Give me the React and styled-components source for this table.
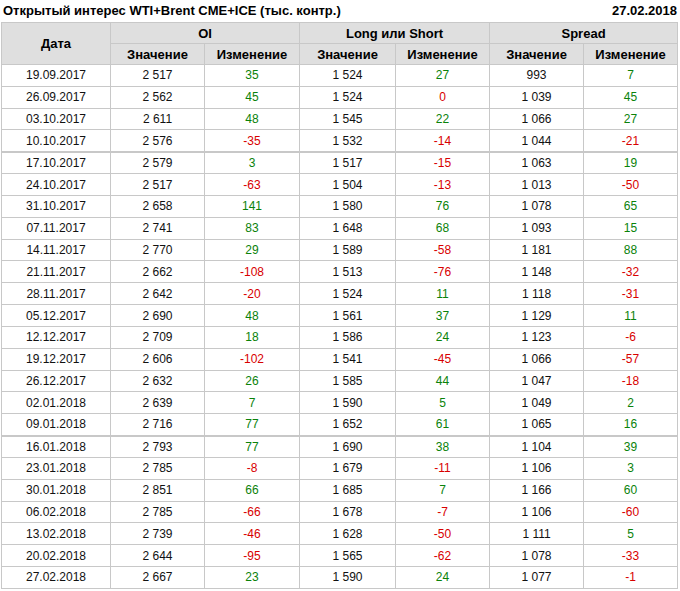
import React from 'react';
import styled, { createGlobalStyle } from 'styled-components';

const GlobalStyle = createGlobalStyle`
  html, body {
    margin: 0;
    padding: 0;
    background: #fff;
  }
  body {
    font-family: "Liberation Sans", Arial, sans-serif;
    color: #111;
  }
`;

// неделя, OI, изм., Long/Short, изм., Spread, изм., жирная линия сверху
const rows = [
  ['19.09.2017', '2 517', 35, '1 524', 27, '993', 7],
  ['26.09.2017', '2 562', 45, '1 524', 0, '1 039', 45],
  ['03.10.2017', '2 611', 48, '1 545', 22, '1 066', 27],
  ['10.10.2017', '2 576', -35, '1 532', -14, '1 044', -21],
  ['17.10.2017', '2 579', 3, '1 517', -15, '1 063', 19, true],
  ['24.10.2017', '2 517', -63, '1 504', -13, '1 013', -50],
  ['31.10.2017', '2 658', 141, '1 580', 76, '1 078', 65],
  ['07.11.2017', '2 741', 83, '1 648', 68, '1 093', 15],
  ['14.11.2017', '2 770', 29, '1 589', -58, '1 181', 88],
  ['21.11.2017', '2 662', -108, '1 513', -76, '1 148', -32],
  ['28.11.2017', '2 642', -20, '1 524', 11, '1 118', -31],
  ['05.12.2017', '2 690', 48, '1 561', 37, '1 129', 11],
  ['12.12.2017', '2 709', 18, '1 586', 24, '1 123', -6],
  ['19.12.2017', '2 606', -102, '1 541', -45, '1 066', -57],
  ['26.12.2017', '2 632', 26, '1 585', 44, '1 047', -18],
  ['02.01.2018', '2 639', 7, '1 590', 5, '1 049', 2],
  ['09.01.2018', '2 716', 77, '1 652', 61, '1 065', 16],
  ['16.01.2018', '2 793', 77, '1 690', 38, '1 104', 39, true],
  ['23.01.2018', '2 785', -8, '1 679', -11, '1 106', 3],
  ['30.01.2018', '2 851', 66, '1 685', 7, '1 166', 60],
  ['06.02.2018', '2 785', -66, '1 678', -7, '1 106', -60],
  ['13.02.2018', '2 739', -46, '1 628', -50, '1 111', 5],
  ['20.02.2018', '2 644', -95, '1 565', -62, '1 078', -33],
  ['27.02.2018', '2 667', 23, '1 590', 24, '1 077', -1],
];

const colWidths = [109, 94, 95, 96, 94, 94, 94];

const App = () => {
  return (
    <Page>
      <GlobalStyle />
      <TitleBar>
        <Title>Открытый интерес WTI+Brent CME+ICE (тыс. контр.)</Title>
        <Title>27.02.2018</Title>
      </TitleBar>
      <Table>
        <colgroup>
          {colWidths.map((w, i) => (
            <col key={i} style={{ width: w }} />
          ))}
        </colgroup>
        <thead>
          <HeadRow>
            <Th rowSpan={2}>Дата</Th>
            <Th colSpan={2}>OI</Th>
            <Th colSpan={2}>Long или Short</Th>
            <Th colSpan={2}>Spread</Th>
          </HeadRow>
          <HeadRow>
            <Th>Значение</Th>
            <Th>Изменение</Th>
            <Th>Значение</Th>
            <Th>Изменение</Th>
            <Th>Значение</Th>
            <Th>Изменение</Th>
          </HeadRow>
        </thead>
        <tbody>
          {rows.map((r) => (
            <Row key={r[0]} $thick={r[7]}>
              <Td>{r[0]}</Td>
              <Td>{r[1]}</Td>
              <Change $up={r[2] > 0}>{r[2]}</Change>
              <Td>{r[3]}</Td>
              <Change $up={r[4] > 0}>{r[4]}</Change>
              <Td>{r[5]}</Td>
              <Change $up={r[6] > 0}>{r[6]}</Change>
            </Row>
          ))}
        </tbody>
      </Table>
    </Page>
  );
};

const Page = styled.div`
  width: 680px;
  padding: 0 0 0 1px;
  box-sizing: border-box;
`;

const TitleBar = styled.div`
  display: flex;
  justify-content: space-between;
  align-items: center;
  height: 22px;
  padding: 0 3px 1px 2px;
  box-sizing: border-box;
`;

const Title = styled.div`
  font-size: 13px;
  font-weight: bold;
  color: #000;
  white-space: nowrap;
`;

const Table = styled.table`
  border-collapse: collapse;
  table-layout: fixed;
  width: 676px;
  font-size: 12px;
`;

const HeadRow = styled.tr`
  height: 21px;
`;

const Th = styled.th`
  border: 1px solid #c8c8c8;
  padding: 0;
  font-size: 13px;
  font-weight: bold;
  color: #000;
  text-align: center;
  background: repeating-conic-gradient(#d4d4d4 0 25%, #e9e9e9 0 50%) 0 0 / 2px 2px;
`;

const Row = styled.tr`
  height: 21.83px;
  td {
    border-top: ${(p) => (p.$thick ? '2px' : '1px')} solid #c8c8c8;
  }
`;

const Td = styled.td`
  border: 1px solid #c8c8c8;
  padding: 0;
  text-align: center;
  white-space: nowrap;
  color: #111;
`;

const Change = styled(Td)`
  color: ${(p) => (p.$up ? '#0a820a' : '#d80000')};
`;

export default App;
